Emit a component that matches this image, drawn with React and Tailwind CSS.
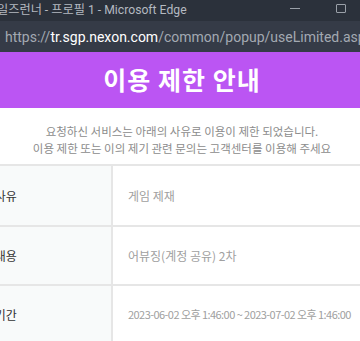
import React from 'react';

const rows = [
  { label: '제한 사유', value: '게임 제재' },
  { label: '제한 내용', value: '어뷰징(계정 공유) 2차' },
  { label: '제한 기간', value: '2023-06-02 오후 1:46:00 ~ 2023-07-02 오후 1:46:00', small: true },
];

const App = () => {
  return (
    <div className="w-[360px] h-[341px] overflow-hidden bg-white" style={{ fontFamily: '"Noto Sans", "Noto Sans CJK KR", sans-serif' }}>
      {/* 창 제목 표시줄 */}
      <div className="h-[21px] bg-[#2b313b] flex items-center relative overflow-hidden">
        <span className="text-[12.2px] text-[#b4b9c0] -ml-[3px] whitespace-nowrap leading-none" style={{ fontFamily: 'Roboto, "Noto Sans CJK KR", sans-serif' }}>
          일즈런너 - 프로필 1 - Microsoft Edge
        </span>
        <div className="absolute left-[290px] top-[8px] w-[10px] h-px bg-[#9aa0a8]"></div>
        <div className="absolute left-[336px] top-[4px] w-[10px] h-[9px] border border-[#9aa0a8] rounded-[1px]"></div>
      </div>

      {/* 주소 표시줄 */}
      <div className="h-[31px] bg-[#353b47] flex items-center pl-[5px] whitespace-nowrap overflow-hidden" style={{ fontFamily: 'Roboto, sans-serif' }}>
        <span className="text-[14px] leading-none text-[#a3a9b2]">https://</span>
        <span className="text-[14px] leading-none text-white">tr.sgp.nexon.com</span>
        <span className="text-[14px] leading-none text-[#a3a9b2]">/common/popup/useLimited.asp</span>
      </div>

      {/* 헤더 */}
      <div className="h-[56px] bg-[#bb55f3] flex items-center justify-center pl-[4px]">
        <h1 className="text-[25px] font-bold text-white tracking-[1px]" style={{ fontFamily: '"Noto Sans CJK KR", sans-serif' }}>
          이용 제한 안내
        </h1>
      </div>

      {/* 안내 문구 */}
      <div className="pt-[15px] pb-[7px] text-center text-[11.5px] leading-[17px] text-[#8c8c8c] pl-[4px]" style={{ fontFamily: '"Noto Sans CJK KR", sans-serif' }}>
        <p>요청하신 서비스는 아래의 사유로 이용이 제한 되었습니다.</p>
        <p>이용 제한 또는 이의 제기 관련 문의는 고객센터를 이용해 주세요</p>
      </div>

      {/* 제한 정보 표 */}
      <div className="border-t-2 border-[#e6e6e6]" style={{ fontFamily: '"Noto Sans CJK KR", sans-serif' }}>
        {rows.map((row, i) => (
          <div key={i} className={`flex h-[59px] ${i > 0 ? 'border-t-2 border-[#e6e6e6]' : ''}`}>
            <div className="w-[113px] shrink-0 bg-[#f8fafa] border-r-2 border-[#e6e6e6] flex items-center overflow-hidden">
              <span className="text-[12px] text-[#333] whitespace-nowrap -ml-[30px]">{row.label}</span>
            </div>
            <div className="flex items-center pl-[15px] whitespace-nowrap">
              <span className={`${row.small ? 'text-[11px] tracking-[-0.55px]' : 'text-[12px]'} text-[#a0a0a0]`}>{row.value}</span>
            </div>
          </div>
        ))}
      </div>
    </div>
  );
};

export default App;
